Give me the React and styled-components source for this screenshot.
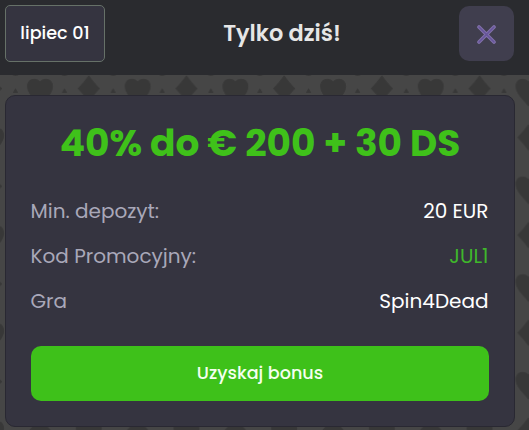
import styled, { createGlobalStyle } from "styled-components";

const rows = [
  { label: "Min. depozyt:", value: "20 EUR" },
  { label: "Kod Promocyjny:", value: "JUL1", accent: true },
  { label: "Gra", value: "Spin4Dead" },
];

function CardSuits() {
  return (
    <Suits width="529" height="355">
      <defs>
        <path
          id="heart"
          d="M0 17C-3 12-12.500 6-12.500-2.500C-12.500-10-4-12 0-7C4-12 12.500-10 12.500-2.500C12.500 6 3 12 0 17Z"
        />
        <path id="diamond" d="M0-12.500Q5-5.500 10.500 0Q5 5.500 0 12.500Q-5 5.500-10.500 0Q-5-5.500 0-12.500Z" />
        <pattern id="suits" width="97.7" height="97.7" patternUnits="userSpaceOnUse">
          <g fill="#383838" stroke="#383838" strokeLinejoin="round">
            <use href="#heart" x="40" y="14" />
            <use href="#diamond" x="88.800" y="13.500" />
            <use href="#diamond" x="-8.900" y="13.500" />
            <use href="#diamond" x="40" y="62.500" />
            <use href="#heart" x="88.800" y="63" />
            <use href="#heart" x="-8.900" y="63" />
            <path d="M13.500 17.500L15.500 14L17.500 17.500ZM62.500 17.500L64.500 14L66.500 17.500ZM13.500 66.500L15.500 63L17.500 66.500ZM62.500 66.500L64.500 63L66.500 66.500Z" />
            <path d="M13 0H18L15.500 0.500ZM62 0H67L64.500 0.500Z" />
          </g>
        </pattern>
      </defs>
      <rect width="529" height="355" fill="url(#suits)" />
    </Suits>
  );
}

//오늘의 보너스 팝업
function App() {
  return (
    <>
      <GlobalStyle />
      <Wrapper>
        <Header>
          <DateBadge>lipiec 01</DateBadge>
          <Title>Tylko dziś!</Title>
          <CloseButton aria-label="Zamknij">
            <svg width="20" height="20" viewBox="0 0 20 20" strokeLinecap="round">
              <path d="M3 3L18 18M18 3L3 18" stroke="#8272ab" strokeWidth="3.6" />
              <path d="M3 3L18 18M18 3L3 18" stroke="#66549a" strokeWidth="1.500" />
            </svg>
          </CloseButton>
        </Header>
        <Content>
          <CardSuits />
          <BonusCard>
            <BonusTitle>40% do € 200 + 30 DS</BonusTitle>
            <InfoList>
              {rows.map((row) => (
                <InfoRow key={row.label}>
                  <Label>{row.label}</Label>
                  <Value $accent={row.accent}>{row.value}</Value>
                </InfoRow>
              ))}
            </InfoList>
            <BonusButton>Uzyskaj bonus</BonusButton>
          </BonusCard>
        </Content>
      </Wrapper>
    </>
  );
}

const GlobalStyle = createGlobalStyle`
  * {
    box-sizing: border-box;
  }

  body {
    margin: 0;
    background-color: #464646;
    font-family: Poppins, Inter, "Liberation Sans", sans-serif;
  }

  button {
    border: none;
    padding: 0;
    font-family: inherit;
    cursor: pointer;
  }
`;

const Wrapper = styled.div`
  height: 430px;
  display: flex;
  flex-direction: column;
  overflow: hidden;
`;

const Header = styled.header`
  height: 75px;
  padding: 5px 15px 13px 5px;
  display: flex;
  align-items: center;
  justify-content: space-between;
  background-color: #2a2b2f;
`;

const DateBadge = styled.div`
  width: 100px;
  height: 57px;
  padding-bottom: 2px;
  display: flex;
  align-items: center;
  justify-content: center;
  background-color: #353440;
  border: 1px solid #667168;
  border-radius: 5px;
  color: #fff;
  font-size: 17.6px;
  font-weight: 500;
`;

const Title = styled.h1`
  margin: 0;
  padding-bottom: 2px;
  color: #e6e6e6;
  font-size: 22.4px;
  font-weight: 600;
`;

const CloseButton = styled.button`
  width: 55px;
  height: 55px;
  display: flex;
  align-items: center;
  justify-content: center;
  background-color: #403e4e;
  border-radius: 10px;
`;

const Content = styled.main`
  position: relative;
  flex: 1;
  padding: 20px 14px 3px 5px;
  display: flex;
  background-color: #464646;
`;

const Suits = styled.svg`
  position: absolute;
  top: 0;
  left: 0;
`;

const BonusCard = styled.section`
  position: relative;
  flex: 1;
  padding: 22px 25px 25px;
  display: flex;
  flex-direction: column;
  background-color: #353440;
  border: 1px solid #292832;
  border-radius: 10px;
`;

const BonusTitle = styled.h2`
  margin: 0;
  color: #3fc11a;
  font-size: 37.5px;
  font-weight: 700;
  line-height: 50px;
  text-align: center;
  white-space: nowrap;
`;

const InfoList = styled.div`
  margin: 20px 0.5px 0 -0.5px;
`;

const InfoRow = styled.div`
  height: 45px;
  display: flex;
  align-items: center;
  justify-content: space-between;
  font-size: 20px;
`;

const Label = styled.span`
  color: #a9a8b9;
`;

const Value = styled.span`
  color: ${(props) => (props.$accent ? "#3fb72b" : "#fff")};
`;

const BonusButton = styled.button`
  height: 55px;
  margin-top: auto;
  padding-bottom: 1px;
  background-color: #3ec11a;
  border-radius: 10px;
  color: #f4ffef;
  font-size: 17.6px;
  font-weight: 500;
`;

export default App;
